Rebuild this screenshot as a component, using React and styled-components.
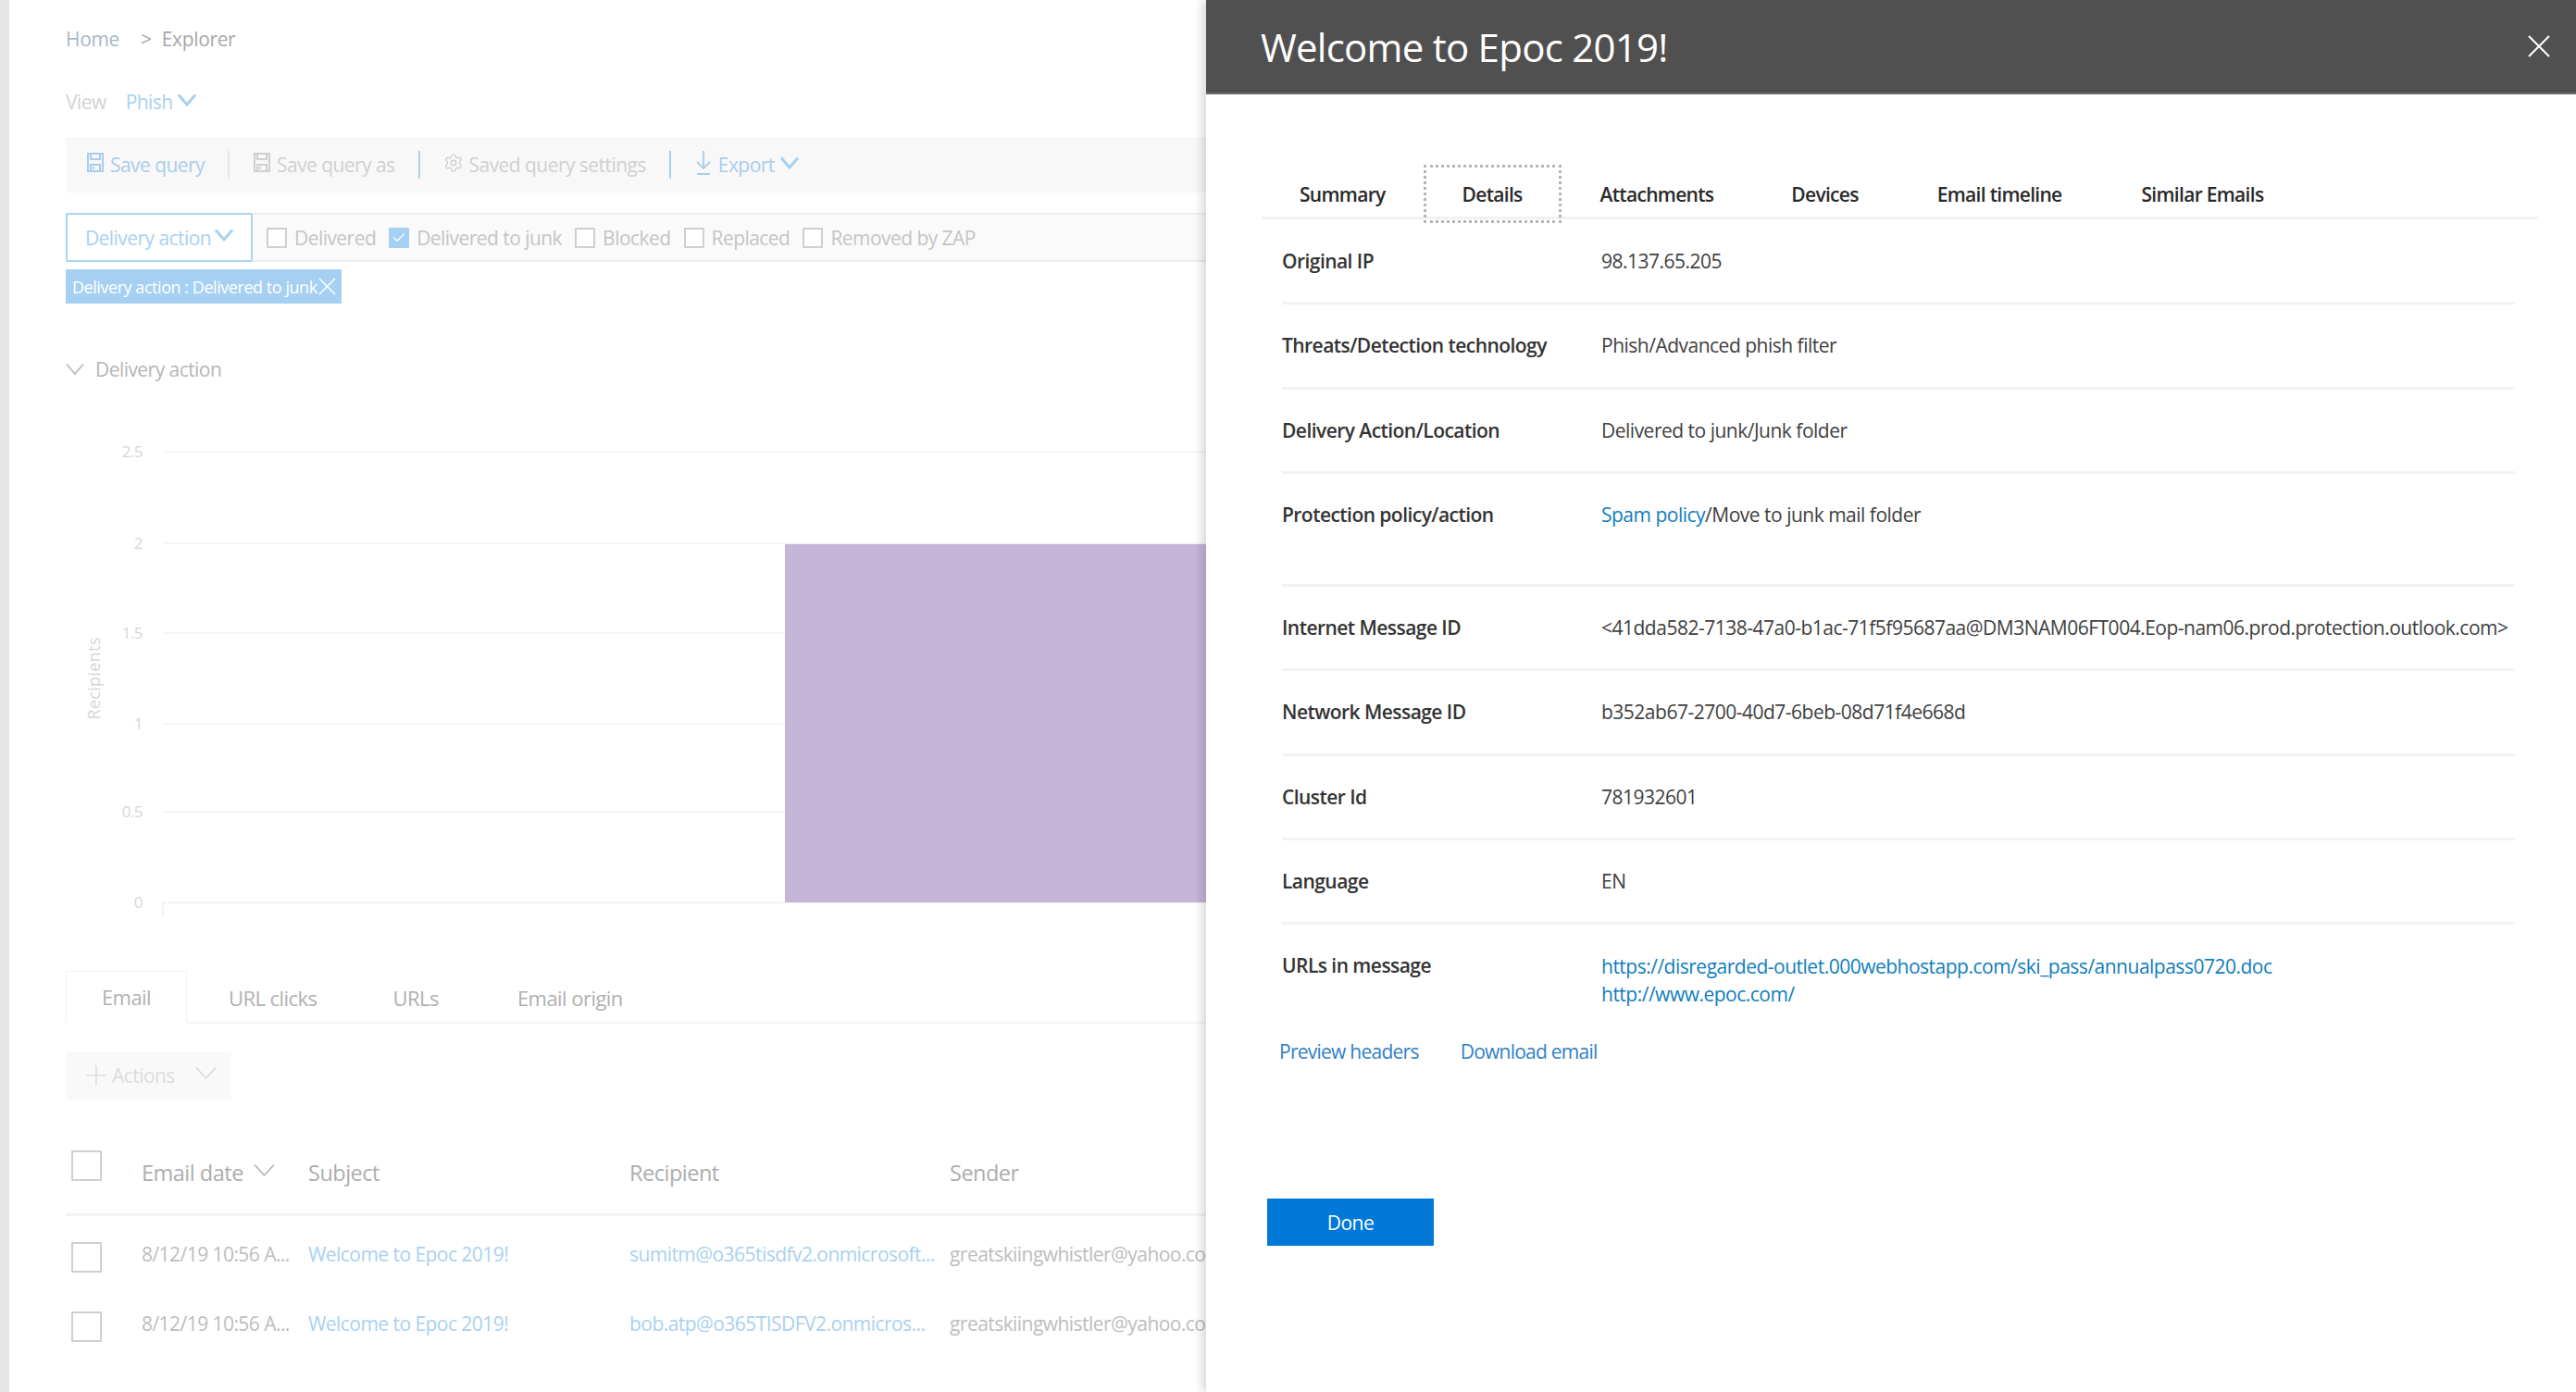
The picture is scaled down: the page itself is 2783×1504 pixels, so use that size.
import React from "react";
import styled, { createGlobalStyle } from "styled-components";
import { Check, Settings } from "lucide-react";

const Global = createGlobalStyle`
  html, body { margin: 0; padding: 0; overflow: hidden; background: #fff; }
  * { box-sizing: border-box; }
  body { font-family: "Open Sans", "Liberation Sans", sans-serif; }
`;

const Shell = styled.div`
  width: 2783px; height: 1504px; display: flex; overflow: hidden; background: #fff;
`;
const Strip = styled.div`
  width: 10px; flex: none; background: #e6e6e6;
`;
const Page = styled.main`
  width: 1293px; flex: none; padding-left: 61px; overflow: hidden;
  font-size: 21px; letter-spacing: -0.55px; color: #bdbdbd;
`;
const Breadcrumb = styled.div`
  height: 84px; display: flex; align-items: center; gap: 23px;
`;
const Crumb = styled.span`
  color: ${p => p.$home ? "#a9b6c6" : "#a8a8a8"};
  word-spacing: 6px;
  letter-spacing: -0.35px;
`;
const ViewRow = styled.div`
  height: 52px; display: flex; align-items: center; gap: 21px; color: #d2d2d2;
`;
const Phish = styled.span`
  color: #a9d1ef; display: inline-flex; align-items: center; gap: 5px;
`;
const Toolbar = styled.div`
  margin-top: 12px; height: 60px; background: #f8f8f8; display: flex; align-items: center; padding-left: 22px;
`;
const ToolItem = styled.span`
  display: inline-flex; align-items: center; gap: 6px; color: ${p => p.$on ? "#a9cdec" : "#d0d0d0"};
  svg { color: ${p => p.$on ? "#a9cdec" : "#cfcfcf"}; }
`;
const Sep = styled.span`
  width: 2px; height: 30px; background: ${p => p.$grey ? "#dfe9f1" : "#a9d1ef"}; margin: 0 25px;
`;
const FilterRow = styled.div`
  margin-top: 22px; height: 53px; display: flex; background: #fafafa;
  border-top: 2px solid #eeeeee; border-bottom: 2px solid #eeeeee;
`;
const FilterButton = styled.div`
  width: 202px; margin: -2px 0; background: #fff; border: 2px solid #a9d4f3; color: #a9d1ef;
  display: flex; align-items: center; justify-content: center; gap: 4px; flex: none; border-radius: 2px;
`;
const Options = styled.div`
  display: flex; align-items: center; padding-left: 15px; gap: 14px; color: #c4c4c4;
`;
const Option = styled.label`
  display: inline-flex; align-items: center; gap: 8px;
`;
const Box = styled.span`
  width: ${p => p.$big ? "33px" : "22px"}; height: ${p => p.$big ? "33px" : "22px"}; flex: none;
  margin-top: ${p => p.$offset || 0}px;
  display: inline-flex; align-items: center; justify-content: center;
  background: ${p => p.$on ? "#a6d0f2" : "#fff"};
  border: 2px solid ${p => p.$on ? "#a6d0f2" : "#cfcfcf"};
  color: #fff; border-radius: 1px;
`;
const Tag = styled.div`
  margin-top: 8px; width: 298px; height: 37px; background: #a6d0f2; color: #fff; font-size: 18px; letter-spacing: -0.45px;
  display: flex; align-items: center; padding-left: 7px; white-space: nowrap; gap: 1px;
`;
const Section = styled.div`
  margin-top: 52px; height: 38px; display: flex; align-items: center; gap: 12px; color: #b5b5b5;
`;
const ChartSvg = styled.svg`
  display: block; width: 1232px; height: 631px;
  text { font-family: "Open Sans", sans-serif; }
`;
const SubTabs = styled.div`
  height: 57px; display: flex; border-bottom: 2px solid #f5f5f5; color: #b0b0b0; font-size: 22px;
`;
const SubTab = styled.div`
  height: 57px; display: flex; align-items: center; margin-left: ${p => p.$left || 0}px; flex: none;
  ${p => p.$on && `width: 131px; border: 1px solid #f2f2f2; border-bottom: 2px solid #fff; justify-content: center;`}
`;
const Actions = styled.div`
  margin-top: 31px; width: 179px; height: 51px; background: #f9f9f9; color: #dcdcdc; padding-bottom: 2px;
  display: flex; align-items: center; padding-left: 22px; gap: 6px;
`;
const Grid = styled.div`
  display: grid; grid-template-columns: 82px 180px 347px 346px 200px; align-items: center; white-space: nowrap;
  height: ${p => p.$head ? "88px" : "75px"};
  margin-top: ${p => p.$head ? "38px" : 0};
  ${p => p.$head && `border-bottom: 3px solid #f3f3f3; padding-bottom: 4px; margin-bottom: 3px; color: #adadad; font-size: 23.5px; letter-spacing: -0.5px;`}
  width: 1232px;
`;
const Cell = styled.div`
  color: ${p => p.$link ? "#a9d1ef" : "inherit"}; display: flex; align-items: center; gap: 11px;
`;
const BoxCell = styled.div`
  padding-left: 6px;
`;
const Panel = styled.aside`
  flex: 1; position: relative; z-index: 2; background: #fff; display: flex; flex-direction: column;
  box-shadow: -4px 0 10px rgba(0,0,0,.16); font-size: 21px; letter-spacing: -0.55px; color: #404040;
`;
const Header = styled.header`
  height: 102px; flex: none; background: #505050; color: #fff; display: flex; align-items: center; justify-content: space-between;
  padding: 0 28px 0 59px; border-bottom: 2px solid #6d6d6d;
`;
const Title = styled.h1`
  margin: 0; font-size: 42px; font-weight: 400; letter-spacing: -0.75px;
`;
const Tabs = styled.nav`
  margin: 76px 42px 0 60px; height: 59px; display: flex; border-bottom: 3px solid #f1f1f1; flex: none; letter-spacing: -0.7px;
`;
const TabItem = styled.div`
  height: 63px; padding: 0 ${p => p.$pad}px; flex: none; display: flex; align-items: center; color: #2a2a2a; font-weight: 600;
  border: 3px ${p => p.$on ? "dotted #b5b5b5" : "solid transparent"};
`;
const Rows = styled.div`
  margin: 1px 66px 0 82px;
`;
const Row = styled.div`
  display: grid; grid-template-columns: 345px 1fr; height: ${p => p.$h}px; padding-top: 30px; line-height: 28px;
  border-bottom: ${p => p.$last ? "none" : "3px solid #f3f3f3"};
`;
const Label = styled.div`
  font-weight: 600; color: #333;
`;
const Value = styled.div`
  white-space: nowrap; line-height: ${p => p.$lh || 28}px; letter-spacing: -0.5px;
`;
const A = styled.span`
  color: #0f7dbd; display: ${p => p.$block ? "block" : "inline"};
`;
const FootLinks = styled.div`
  margin: 0 0 0 79px; height: 44px; display: flex; align-items: center; gap: 45px; color: #2f80c4; letter-spacing: -0.75px;
`;
const Done = styled.button`
  margin: 137px 0 0 66px; width: 180px; height: 51px; background: #0078d7; color: #fff; border: 0; font: inherit; letter-spacing: inherit;
`;
const GlyphSvg = styled.svg`
  flex: none; display: block;
  margin-top: ${p => p.$lift ? `-${p.$lift}px` : 0};
`;

const Vee = ({ c = "currentColor", w = 20, h = 12, s = 3, lift = 5 }) => (
  <GlyphSvg $lift={lift} width={w} height={h + 2} viewBox={`0 0 ${w} ${h + 2}`} fill="none" stroke={c} strokeWidth={s}>
    <path d={`M1 1.5 L${w / 2} ${h} L${w - 1} 1.5`} />
  </GlyphSvg>
);
const Cross = ({ size, s = 1.6, c = "currentColor" }) => (
  <GlyphSvg width={size} height={size} viewBox={`0 0 ${size} ${size}`} fill="none" stroke={c} strokeWidth={s}>
    <path d={`M1 1 L${size - 1} ${size - 1} M${size - 1} 1 L1 ${size - 1}`} />
  </GlyphSvg>
);
const Floppy = () => (
  <GlyphSvg $lift={5} width="20" height="21" viewBox="0 0 20 21" fill="none" stroke="currentColor" strokeWidth="2">
    <path d="M2 1 H18 V20 H2 Z" />
    <path d="M5 1 V7 H15 V1" />
    <path d="M5 20 V13 H15 V20" />
    <path d="M8 15 V18" />
  </GlyphSvg>
);
const ExportArrow = () => (
  <GlyphSvg $lift={4} width="20" height="28" viewBox="0 0 20 28" fill="none" stroke="currentColor" strokeWidth="1.8">
    <path d="M10 1 V20 M3 13 L10 20 L17 13 M3 26 H17" />
  </GlyphSvg>
);
const PlusMark = () => (
  <GlyphSvg width="22" height="22" viewBox="0 0 22 22" fill="none" stroke="#dcdcdc" strokeWidth="1.5">
    <path d="M11 0 V22 M0 11 H22" />
  </GlyphSvg>
);

const ticks = [["2.5", 70], ["2", 169], ["1.5", 266], ["1", 364], ["0.5", 459], ["0", 557]];

const rows = [
  ["8/12/19 10:56 A...", "sumitm@o365tisdfv2.onmicrosoft..."],
  ["8/12/19 10:56 A...", "bob.atp@o365TISDFV2.onmicros..."],
];

export default function App() {
  return (
    <Shell>
      <Global />
      <Strip />
      <Page>
        <Breadcrumb><Crumb $home>Home</Crumb><Crumb>&gt; Explorer</Crumb></Breadcrumb>
        <ViewRow>View<Phish>Phish<Vee c="#a9d1ef" /></Phish></ViewRow>
        <Toolbar>
          <ToolItem $on><Floppy />Save query</ToolItem>
          <Sep $grey />
          <ToolItem><Floppy />Save query as</ToolItem>
          <Sep />
          <ToolItem><Settings size={22} strokeWidth={1.5} style={{ marginTop: -5 }} />Saved query settings</ToolItem>
          <Sep />
          <ToolItem $on><ExportArrow />Export<Vee c="#a9d1ef" /></ToolItem>
        </Toolbar>
        <FilterRow>
          <FilterButton>Delivery action<Vee c="#a9d1ef" /></FilterButton>
          <Options>
            <Option><Box />Delivered</Option>
            <Option><Box $on><Check size={16} strokeWidth={2} /></Box>Delivered to junk</Option>
            <Option><Box />Blocked</Option>
            <Option><Box />Replaced</Option>
            <Option><Box />Removed by ZAP</Option>
          </Options>
        </FilterRow>
        <Tag>Delivery action : Delivered to junk<Cross size={19} s={1.5} /></Tag>
        <Section><Vee c="#b5b5b5" s={1.6} lift={0} />Delivery action</Section>
        <ChartSvg viewBox="0 0 1232 631">
          {ticks.map(([t, y]) => (
            <g key={t}>
              <line x1="105" x2="1232" y1={y} y2={y} stroke="#f6f6f6" strokeWidth="2" />
              <text x="83" y={y + 6} textAnchor="end" fontSize="17" fill="#d6d6d6">{t}</text>
            </g>
          ))}
          <line x1="105" x2="105" y1="557" y2="572" stroke="#f3f3f3" strokeWidth="2" />
          <rect x="777" y="170" width="455" height="387" fill="#c4b5d9" />
          <text transform="translate(37 315) rotate(-90)" textAnchor="middle" fontSize="18" letterSpacing="0.3" fill="#d6d6d6">Recipients</text>
        </ChartSvg>
        <SubTabs>
          <SubTab $on>Email</SubTab>
          <SubTab $left={45}>URL clicks</SubTab>
          <SubTab $left={82}>URLs</SubTab>
          <SubTab $left={85}>Email origin</SubTab>
        </SubTabs>
        <Actions><PlusMark />Actions<span style={{ width: 10 }} /><Vee c="#d8d8d8" w={23} h={13} s={1.5} /></Actions>
        <Grid $head>
          <BoxCell><Box $big $offset={-10} /></BoxCell>
          <Cell>Email date<Vee c="#adadad" w={23} h={13} s={1.5} /></Cell>
          <Cell>Subject</Cell>
          <Cell>Recipient</Cell>
          <Cell>Sender</Cell>
        </Grid>
        {rows.map(([d, r]) => (
          <Grid key={r}>
            <BoxCell><Box $big $offset={14} /></BoxCell>
            <Cell>{d}</Cell>
            <Cell $link>Welcome to Epoc 2019!</Cell>
            <Cell $link>{r}</Cell>
            <Cell>greatskiingwhistler@yahoo.com</Cell>
          </Grid>
        ))}
      </Page>
      <Panel>
        <Header>
          <Title>Welcome to Epoc 2019!</Title>
          <Cross size={24} s={2} />
        </Header>
        <Tabs>
          <TabItem $pad={38}>Summary</TabItem>
          <TabItem $on $pad={39}>Details</TabItem>
          <TabItem $pad={39}>Attachments</TabItem>
          <TabItem $pad={39}>Devices</TabItem>
          <TabItem $pad={40}>Email timeline</TabItem>
          <TabItem $pad={40}>Similar Emails</TabItem>
        </Tabs>
        <Rows>
          <Row $h={91}><Label>Original IP</Label><Value>98.137.65.205</Value></Row>
          <Row $h={92}><Label>Threats/Detection technology</Label><Value>Phish/Advanced phish filter</Value></Row>
          <Row $h={91}><Label>Delivery Action/Location</Label><Value>Delivered to junk/Junk folder</Value></Row>
          <Row $h={122}><Label>Protection policy/action</Label><Value><A>Spam policy</A>/Move to junk mail folder</Value></Row>
          <Row $h={91}><Label>Internet Message ID</Label><Value>&lt;41dda582-7138-47a0-b1ac-71f5f95687aa@DM3NAM06FT004.Eop-nam06.prod.protection.outlook.com&gt;</Value></Row>
          <Row $h={92}><Label>Network Message ID</Label><Value>b352ab67-2700-40d7-6beb-08d71f4e668d</Value></Row>
          <Row $h={91}><Label>Cluster Id</Label><Value>781932601</Value></Row>
          <Row $h={91}><Label>Language</Label><Value>EN</Value></Row>
          <Row $h={115} $last><Label>URLs in message</Label><Value $lh={30}><A $block>https://disregarded-outlet.000webhostapp.com/ski_pass/annualpass0720.doc</A><A $block>http://www.epoc.com/</A></Value></Row>
        </Rows>
        <FootLinks><span>Preview headers</span><span>Download email</span></FootLinks>
        <Done>Done</Done>
      </Panel>
    </Shell>
  );
}
